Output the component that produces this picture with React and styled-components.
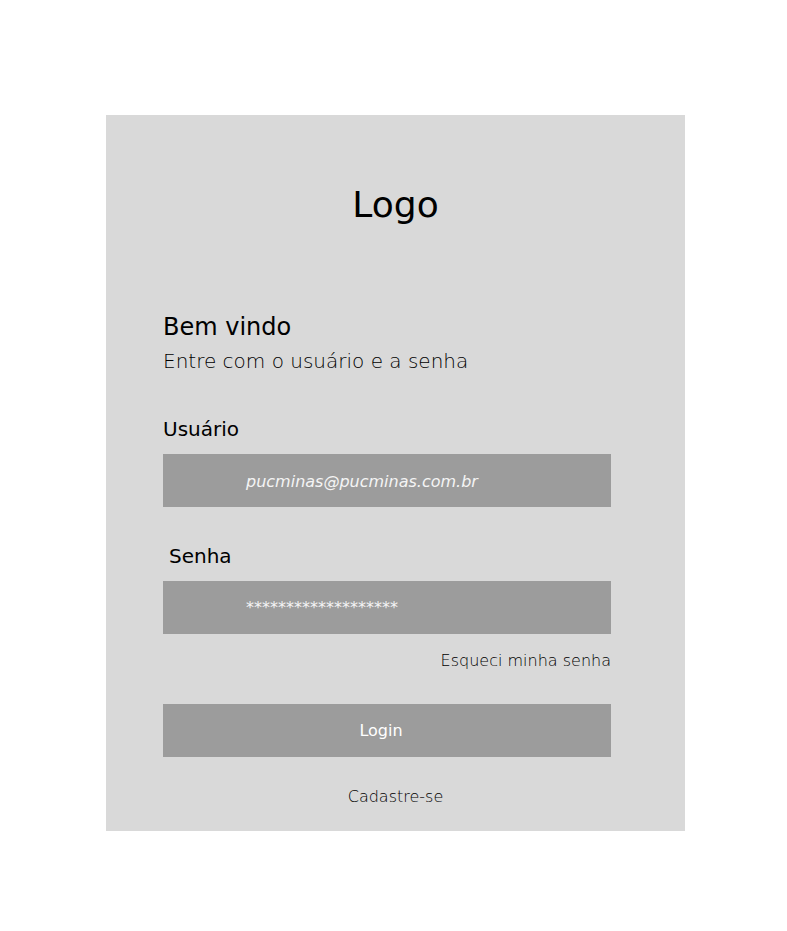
import React from "react";
import styled, { createGlobalStyle } from "styled-components";

const Global = createGlobalStyle`
  html, body { margin: 0; padding: 0; background: #ffffff; }
  body { font-family: "DejaVu Sans", "Noto Sans", sans-serif; color: #000; }
  * { box-sizing: border-box; }
`;

const Page = styled.div`
  width: 787px;
  min-height: 931px;
  padding: 115px 0 0 106px;
`;

const Card = styled.main`
  width: 579px;
  height: 716px;
  background: #d9d9d9;
  padding: 72px 74px 0 57px;
  display: flex;
  flex-direction: column;
`;

const Logo = styled.h1`
  margin: 0;
  font-size: 36px;
  line-height: 36px;
  font-weight: 400;
  text-align: center;
  padding-left: 17px;
`;

const Title = styled.h2`
  margin: 92px 0 0;
  font-size: 24px;
  line-height: 24px;
  font-weight: 400;
`;

const Subtitle = styled.p`
  margin: 12px 0 0;
  font-size: 20px;
  line-height: 20px;
  font-weight: 300;
  color: #000;
`;

const Label = styled.label`
  display: block;
  margin: ${(p) => p.$top}px 0 0 ${(p) => p.$indent || 0}px;
  font-size: 20px;
  line-height: 20px;
  font-weight: 400;
`;

const Field = styled.div`
  margin-top: 15px;
  width: 448px;
  height: 53px;
  background: #9c9c9c;
  display: flex;
  align-items: center;
  padding: ${(p) => (p.$secret ? "0 0 0 83px" : "2px 0 0 83px")};
  color: #f4f4f4;
  font-size: 16px;
  line-height: 16px;
  font-weight: ${(p) => (p.$secret ? 400 : 300)};
  font-style: ${(p) => (p.$secret ? "normal" : "italic")};
`;

const Forgot = styled.a`
  align-self: flex-end;
  width: 448px;
  text-align: right;
  margin-top: 19px;
  font-size: 16px;
  line-height: 16px;
  font-weight: 300;
  color: #000;
  text-decoration: none;
`;

const LoginButton = styled.button`
  margin-top: 35px;
  width: 448px;
  height: 53px;
  border: none;
  background: #9c9c9c;
  color: #ffffff;
  font-family: "DejaVu Sans", "Noto Sans", sans-serif;
  font-size: 16px;
  line-height: 16px;
  font-weight: 400;
  padding: 0 12px 0 0;
  cursor: pointer;
`;

const Register = styled.a`
  margin-top: 32px;
  padding-left: 17px;
  text-align: center;
  font-size: 16px;
  line-height: 16px;
  font-weight: 300;
  color: #000;
  text-decoration: none;
`;

export default function App() {
  return (
    <>
      <Global />
      <Page>
        <Card>
          <Logo>Logo</Logo>
          <Title>Bem vindo</Title>
          <Subtitle>Entre com o usuário e a senha</Subtitle>
          <Label $top={48}>Usuário</Label>
          <Field>pucminas@pucminas.com.br</Field>
          <Label $top={39} $indent={6}>Senha</Label>
          <Field $secret>*******************</Field>
          <Forgot href="#">Esqueci minha senha</Forgot>
          <LoginButton>Login</LoginButton>
          <Register href="#">Cadastre-se</Register>
        </Card>
      </Page>
    </>
  );
}
